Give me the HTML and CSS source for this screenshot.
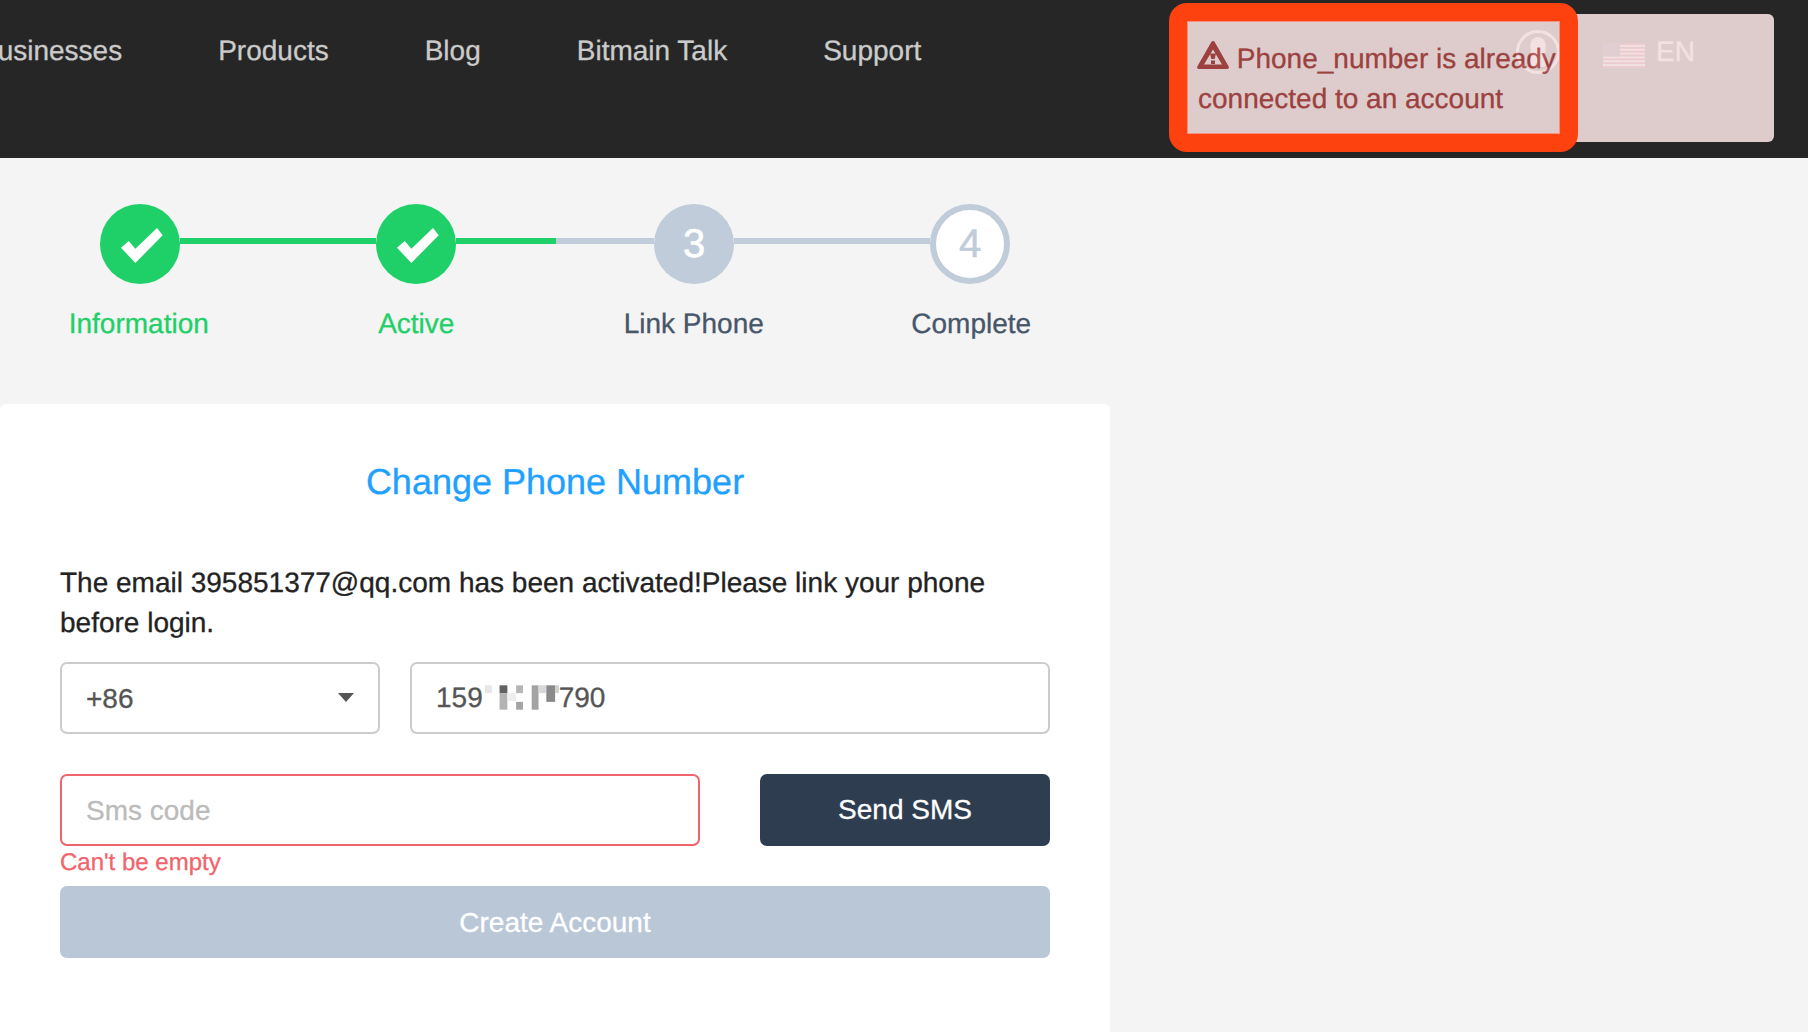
FILE: index.html
```html
<!DOCTYPE html>
<html lang="en">
<head>
  <meta charset="UTF-8">
  <meta name="viewport" content="width=device-width, initial-scale=1.0">
  <title>Change Phone Number</title>
  <link rel="stylesheet" href="styles.css">
</head>
<body>
  <header class="header">
    <nav class="nav">
      <a href="#">Businesses</a>
      <a href="#">Products</a>
      <a href="#">Blog</a>
      <a href="#">Bitmain Talk</a>
      <a href="#">Support</a>
    </nav>
    <div class="header-right">
      <svg class="user-icon" viewBox="0 0 44 44" width="44" height="44">
        <circle cx="22" cy="22" r="20.5" fill="none" stroke="#fff" stroke-width="3"/>
        <path d="M14.5 14.5a7.5 7.5 0 0 1 15 0V36a20 20 0 0 1-15 0z" fill="#fff"/>
      </svg>
      <svg class="flag" viewBox="0 0 42 25" width="42" height="25">
        <rect width="42" height="25" fill="#fff"/>
        <g fill="#b22234">
          <rect y="0" width="42" height="1.92"/>
          <rect y="3.85" width="42" height="1.92"/>
          <rect y="7.69" width="42" height="1.92"/>
          <rect y="11.54" width="42" height="1.92"/>
          <rect y="15.38" width="42" height="1.92"/>
          <rect y="19.23" width="42" height="1.92"/>
          <rect y="23.08" width="42" height="1.92"/>
        </g>
        <rect width="17" height="13.5" fill="#3c3b6e"/>
      </svg>
      <span class="lang">EN</span>
    </div>

    <div class="alert">
      <svg class="alert-icon" viewBox="0 0 32 28" width="32" height="28">
        <path fill-rule="evenodd" d="M16 0a2 2 0 0 1 1.700 1L31.700 25.500a1.700 1.700 0 0 1-1.500 2.500H1.800a1.700 1.700 0 0 1-1.500-2.500L14.300 1A2 2 0 0 1 16 0zM16 8.500L7 23.500h18z"/>
        <path d="M13 12.500h6l-1.300 5.500h-3.400zM14 19.500h4v3.500h-4z"/>
      </svg>
      Phone_number is already connected to an account
    </div>
    <div class="alert-marker"></div>
  </header>

  <div class="stepper">
    <div class="step-track">
      <div class="step-circle done">
        <svg class="check" viewBox="0 0 42 35" width="42" height="35"><path d="M0 19.700L7.700 13l6.600 7.700L36 0l5.700 7.300L14.300 35z" fill="#fff"/></svg>
      </div>
      <div class="step-line done short"></div>
      <div class="step-circle done">
        <svg class="check" viewBox="0 0 42 35" width="42" height="35"><path d="M0 19.700L7.700 13l6.600 7.700L36 0l5.700 7.300L14.300 35z" fill="#fff"/></svg>
      </div>
      <div class="step-line half"></div>
      <div class="step-circle current">3</div>
      <div class="step-line short"></div>
      <div class="step-circle todo">4</div>
    </div>
    <div class="step-labels">
      <span class="step-label done">Information</span>
      <span class="step-label done">Active</span>
      <span class="step-label">Link Phone</span>
      <span class="step-label">Complete</span>
    </div>
  </div>

  <main class="card">
    <h1 class="card-title">Change Phone Number</h1>
    <p class="card-text">The email 395851377@qq.com has been activated!Please link your phone before login.</p>

    <div class="form-row">
      <div class="select-wrap">
        <select class="field">
          <option>+86</option>
        </select>
      </div>
      <div class="field phone-field">
        <span>159</span>
        <svg class="mosaic" viewBox="0 0 78 25" width="76" height="25">
          <rect x="2" y="0" width="7" height="8" fill="#e6e6e6"/>
          <rect x="17" y="0" width="8" height="8" fill="#616161"/>
          <rect x="17" y="8" width="8" height="17" fill="#b3b3b3"/>
          <rect x="25" y="8" width="9" height="8" fill="#eeeeee"/>
          <rect x="34" y="0" width="7" height="8" fill="#b5b5b5"/>
          <rect x="34" y="17" width="7" height="8" fill="#a3a3a3"/>
          <rect x="50" y="0" width="7" height="25" fill="#a3a3a3"/>
          <rect x="57" y="0" width="8" height="8" fill="#d8d8d8"/>
          <rect x="65" y="0" width="9" height="17" fill="#8a8a8a"/>
          <rect x="74" y="0" width="4" height="8" fill="#d0d0d0"/>
        </svg>
        <span>790</span>
      </div>
    </div>

    <div class="form-row sms-row">
      <input class="field sms-input" type="text" placeholder="Sms code">
      <button class="btn btn-dark" type="button">Send SMS</button>
    </div>
    <div class="error-text">Can't be empty</div>
    <button class="btn btn-disabled" type="button">Create Account</button>
  </main>
</body>
</html>
```

FILE: styles.css
```css
* {
  box-sizing: border-box;
}

body {
  margin: 0;
  background-color: #f4f4f4;
  font-family: 'Liberation Sans', Arial, sans-serif;
  font-size: 28px;
  line-height: 40px;
  color: #333;
  overflow: hidden;
  text-rendering: geometricPrecision;
  -webkit-text-stroke: 0.3px;
}

.header {
  position: relative;
  display: flex;
  height: 158px;
  background-color: #262626;
}

.nav {
  display: flex;
  gap: 96px;
  margin-left: -21px;
  padding-top: 31px;
}

.nav a {
  color: #cbcbcb;
  text-decoration: none;
  white-space: nowrap;
}

.header-right {
  display: flex;
  align-items: flex-start;
  margin-left: auto;
  padding-right: 113px;
  padding-top: 30px;
}

.user-icon {
  margin-right: 43px;
}

.flag {
  margin-top: 13px;
  margin-right: 11px;
}

.lang {
  color: #fff;
  margin-top: 2px;
}

.alert {
  position: absolute;
  top: 14px;
  right: 34px;
  width: 593px;
  height: 128px;
  padding: 25px 100px 0 17px;
  background-color: #f2dede;
  border-radius: 6px;
  color: #a94442;
  opacity: 0.9;
}

.alert-icon {
  fill: #a94442;
  vertical-align: -1px;
  margin-left: -1px;
}

.alert-marker {
  position: absolute;
  top: 3px;
  left: 1169px;
  width: 409px;
  height: 149px;
  border: 18px solid #fd4210;
  border-radius: 18px;
  box-shadow: inset 0 0 0 1px rgba(255, 120, 90, 0.7);
}

.stepper {
  padding-top: 46px;
}

.step-track {
  display: flex;
  align-items: center;
  padding-left: 100px;
}

.step-circle {
  display: flex;
  align-items: center;
  justify-content: center;
  flex: none;
  width: 80px;
  height: 80px;
  border-radius: 50%;
  font-size: 40px;
  -webkit-text-stroke: 0.6px;
}

.check {
  margin: 2px 0 0 3px;
}

.step-circle.done {
  background-color: #1fd068;
}

.step-circle.current {
  background-color: #c0ccda;
  color: #fff;
}

.step-circle.todo {
  background-color: #fff;
  border: 6px solid #c0ccda;
  color: #c0ccda;
}

.step-line {
  flex: none;
  width: 198px;
  height: 6px;
  margin-bottom: 6px;
  background-color: #c0ccda;
}

.step-line.short {
  width: 196px;
}

.step-line.done {
  background-color: #1fd068;
}

.step-line.half {
  background: linear-gradient(to right, #1fd068 50.5%, #c0ccda 50.5%);
}

.step-labels {
  display: flex;
  margin-top: 20px;
}

.step-label {
  width: 277.5px;
  text-align: center;
  color: #475669;
}

.step-label.done {
  color: #1fd068;
}

.card {
  width: 1110px;
  min-height: 628px;
  margin-top: 60px;
  padding: 53px 60px 0;
  background-color: #fff;
  border-radius: 6px 6px 0 0;
}

.card-title {
  margin: 0 0 56px;
  font-size: 36px;
  font-weight: normal;
  line-height: 50px;
  text-align: center;
  color: #20a0ff;
}

.card-text {
  margin: 0 0 19px;
  color: #222;
}

.form-row {
  display: flex;
  gap: 30px;
}

.sms-row {
  gap: 60px;
  margin-top: 40px;
}

.select-wrap {
  position: relative;
  flex: none;
  width: 320px;
}

.select-wrap::after {
  content: "";
  position: absolute;
  top: 31px;
  right: 26px;
  border-top: 9px solid #555;
  border-left: 8px solid transparent;
  border-right: 8px solid transparent;
}

.field {
  width: 100%;
  height: 72px;
  padding: 0 24px;
  border: 2px solid #ccc;
  border-radius: 7px;
  background-color: #fff;
  font-family: inherit;
  font-size: 28px;
  color: #555;
  outline: none;
}

select.field {
  appearance: none;
}

.phone-field {
  display: flex;
  align-items: center;
  flex: 1;
}

.mosaic {
  flex: none;
  margin-top: -1px;
}

.sms-input {
  flex: none;
  width: 640px;
  padding-top: 2px;
  border-color: #f0646c;
}

.sms-input::placeholder {
  color: #bbb;
  opacity: 1;
}

.btn {
  height: 72px;
  border: none;
  border-radius: 7px;
  font-family: inherit;
  font-size: 28px;
  color: #fff;
}

.btn-dark {
  flex: none;
  width: 290px;
  background-color: #2e3e50;
}

.btn-disabled {
  display: block;
  width: 100%;
  padding-top: 2px;
  background-color: #bac7d7;
}

.error-text {
  height: 40px;
  font-size: 24px;
  line-height: 34px;
  color: #f0646c;
}
```
